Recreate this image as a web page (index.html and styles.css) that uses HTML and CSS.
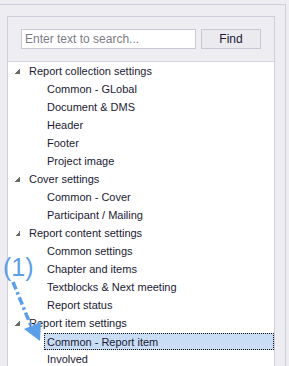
FILE: index.html
```html
<!DOCTYPE html>
<html lang="en">
<head>
  <meta charset="UTF-8">
  <title>Settings navigator</title>
  <link rel="stylesheet" href="styles.css">
</head>
<body>

<div class="outer">
  <div class="panel">
    <div class="search-bar">
      <input type="text" class="search-input" placeholder="Enter text to search...">
      <button class="find-btn">Find</button>
    </div>
    <ul class="tree">
      <li class="group"><span class="expander"></span>Report collection settings</li>
      <li class="item">Common - GLobal</li>
      <li class="item">Document &amp; DMS</li>
      <li class="item">Header</li>
      <li class="item">Footer</li>
      <li class="item">Project image</li>
      <li class="group"><span class="expander"></span>Cover settings</li>
      <li class="item">Common - Cover</li>
      <li class="item">Participant / Mailing</li>
      <li class="group"><span class="expander"></span>Report content settings</li>
      <li class="item">Common settings</li>
      <li class="item">Chapter and items</li>
      <li class="item">Textblocks &amp; Next meeting</li>
      <li class="item">Report status</li>
      <li class="group"><span class="expander"></span>Report item settings</li>
      <li class="item selected"><span class="sel-box">Common - Report item</span></li>
      <li class="item">Involved</li>
    </ul>
  </div>
</div>

<!-- callout drawn over the tree -->
<div class="callout">
  <span class="callout-num">(1)</span>
  <svg class="callout-arrow" width="60" height="100" viewBox="0 0 60 100">
    <line x1="13" y1="32" x2="31" y2="76" stroke="#5b9fe9" stroke-width="3.5" stroke-dasharray="8 3 2.5 3"/>
    <polygon points="24,79 41,72 40,91" fill="#5b9fe9"/>
  </svg>
</div>

</body>
</html>
```

FILE: styles.css
```css
body {
  margin: 0;
  padding: 0;
  background: #eeedf2;
  font-family: 'Liberation Sans', Arial, sans-serif;
  font-size: 11px;
  color: #1a1a34;
  overflow: hidden;
  height: 366px;
  position: relative;
}
.outer {
  margin-top: 4px;
  width: 286px;
  height: 362px;
  border-top: 1px solid #cfcfdc;
  border-right: 1px solid #cfcfdc;
  box-sizing: border-box;
  padding: 11px 0 0 7px;
}
.panel {
  width: 268px;
  height: 350px;
  overflow: hidden;
  border: 1px solid #cfcfdc;
  border-bottom: none;
  box-sizing: border-box;
  background: #eeedf2;
  display: flex;
  flex-direction: column;
}
.search-bar {
  display: flex;
  gap: 5px;
  padding: 12px 0 0 13px;
  height: 32px;
  flex-shrink: 0;
  border-bottom: 1px solid #d6d6e0;
}
.search-input {
  width: 175px;
  height: 20px;
  box-sizing: border-box;
  margin: 0;
  padding: 0 3px;
  border: 1px solid #c9c9d6;
  background: #fff;
  font-family: inherit;
  font-size: 12px;
  color: #1a1a34;
  outline: none;
}
.search-input::placeholder {
  color: #7c7c86;
}
.find-btn {
  width: 60px;
  height: 20px;
  margin: 0;
  padding: 0;
  border: 1px solid #c9c9d6;
  background: #ebeaef;
  font-family: inherit;
  font-size: 12px;
  color: #1a1a34;
}
.tree {
  list-style: none;
  margin: 0;
  padding: 0;
  background: #fff;
  flex: 1;
}
.tree li {
  height: 18px;
  line-height: 18px;
  white-space: nowrap;
  display: flex;
  align-items: center;
}
.group {
  padding-left: 7px;
}
.expander {
  width: 5px;
  height: 5px;
  margin-right: 9px;
  margin-top: 1px;
  background: linear-gradient(135deg, transparent 50%, #6a6a6a 50%);
}
.item {
  padding-left: 39px;
}
.selected {
  padding-left: 36px;
}
.sel-box {
  flex: 1;
  height: 17px;
  line-height: 16px;
  padding-left: 2px;
  border: 1px dotted #111;
  box-sizing: border-box;
  background: #c9ddf4;
}
.callout {
  position: absolute;
  left: 0;
  top: 250px;
  width: 60px;
  height: 100px;
}
.callout-num {
  position: absolute;
  left: 3px;
  top: 2px;
  font-size: 25px;
  line-height: 30px;
  color: #5b9fe9;
}
.callout-arrow {
  position: absolute;
  left: 0;
  top: 0;
}
```
